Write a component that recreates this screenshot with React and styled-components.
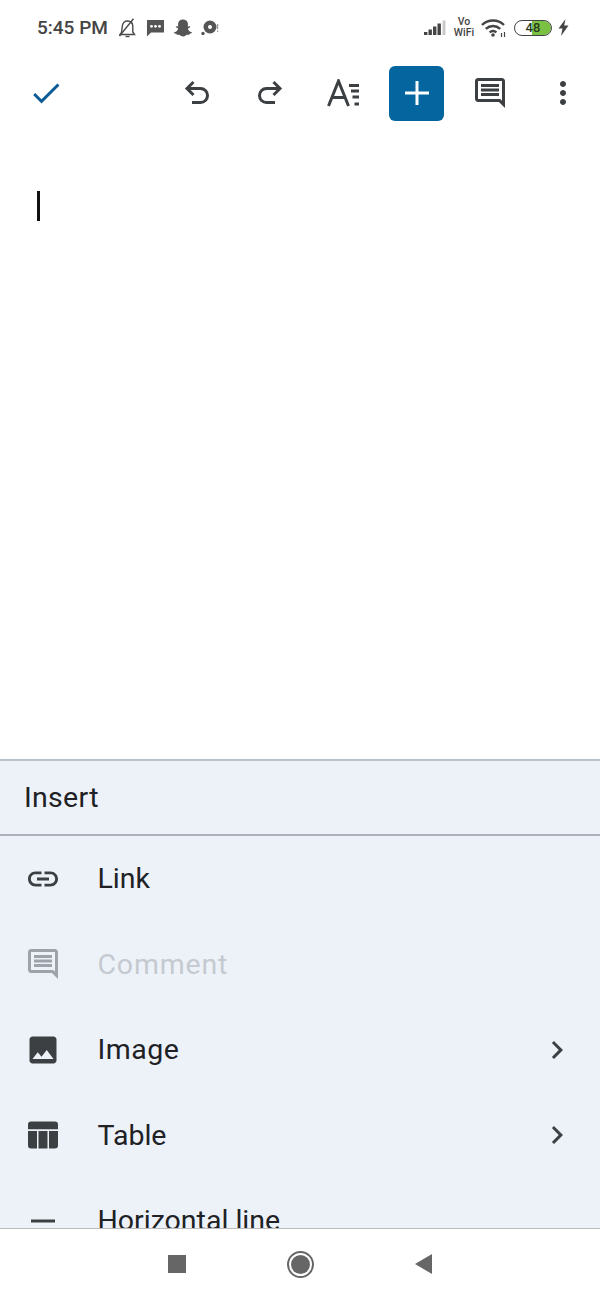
import React from 'react';
import styled, { createGlobalStyle } from 'styled-components';
import { FaSnapchatGhost } from 'react-icons/fa';

const Global = createGlobalStyle`
  html, body {
    margin: 0;
    padding: 0;
    background: #fff;
  }
  * {
    box-sizing: border-box;
  }
`;

const Page = styled.div`
  width: 600px;
  height: 1300px;
  display: flex;
  flex-direction: column;
  background: #fff;
  font-family: Roboto, "Liberation Sans", sans-serif;
  overflow: hidden;
`;

const StatusBar = styled.div`
  height: 55px;
  flex-shrink: 0;
  display: flex;
  align-items: center;
  padding: 0 31px 0 37px;
  color: #4a4a4a;
`;

const Time = styled.span`
  font-family: Roboto, sans-serif;
  font-size: 19px;
  font-weight: 500;
  color: #444;
  margin-right: 1px;
`;

const StatusLeft = styled.div`
  display: flex;
  align-items: center;
  gap: 9px;
`;

const StatusRight = styled.div`
  display: flex;
  align-items: center;
  gap: 7px;
  margin-left: auto;
`;

const VoWifi = styled.span`
  font-family: Roboto, sans-serif;
  font-size: 10.5px;
  line-height: 10.5px;
  font-weight: 500;
  color: #444;
  text-align: center;
  width: 22px;
  margin: 0 -1px 0 -1px;
`;

const Battery = styled.span`
  width: 38px;
  height: 16px;
  border: 1.5px solid #444;
  border-radius: 8px;
  display: flex;
  align-items: center;
  justify-content: center;
  font-family: Roboto, sans-serif;
  font-size: 13px;
  font-weight: 500;
  color: #2a3a20;
  background: linear-gradient(90deg, transparent 46%, #7ac143 46%);
  background-clip: padding-box;
  margin-right: -1px;
`;

const Toolbar = styled.div`
  height: 76px;
  flex-shrink: 0;
  display: flex;
  align-items: center;
  padding: 0 1px 0 28px;
`;

const ToolGroup = styled.div`
  display: flex;
  align-items: center;
  margin-left: auto;
`;

const ToolCell = styled.div`
  width: 73px;
  height: 56px;
  display: flex;
  align-items: center;
  justify-content: center;
  color: #3c4043;
`;

const PlusButton = styled.div`
  width: 55px;
  height: 55px;
  border-radius: 6px;
  background: #05669f;
  display: flex;
  align-items: center;
  justify-content: center;
`;

const Editor = styled.div`
  flex: 1;
  padding: 60px 0 0 37px;
`;

const Caret = styled.div`
  width: 2.5px;
  height: 30px;
  background: #111;
`;

const Sheet = styled.div`
  height: 469px;
  flex-shrink: 0;
  display: flex;
  flex-direction: column;
  background: #edf2f9;
  border-top: 2px solid #b9c1c9;
  overflow: hidden;
`;

const SheetHeader = styled.div`
  height: 75px;
  flex-shrink: 0;
  display: flex;
  align-items: center;
  padding-left: 24px;
  border-bottom: 2px solid #adb3bd;
  font-size: 28.5px;
  letter-spacing: 0.3px;
  color: #202124;
`;

const Row = styled.div`
  height: 85.5px;
  flex-shrink: 0;
  display: flex;
  align-items: center;
  padding: 0 25px;
  color: ${(p) => (p.$disabled ? '#9ea2aa' : '#3c4043')};
`;

const RowLabel = styled.span`
  margin-left: 36.5px;
  font-size: 28.5px;
  letter-spacing: ${(p) => p.$spacing || 0}px;
  color: ${(p) => (p.$disabled ? '#c5c9d0' : '#202124')};
`;

const RowEnd = styled.div`
  margin-left: auto;
  display: flex;
`;

const NavBar = styled.div`
  height: 72px;
  flex-shrink: 0;
  display: flex;
  align-items: center;
  justify-content: center;
  gap: 101px;
  border-top: 1px solid #bcbcbc;
  background: #fff;
  padding: 0 1px 1px 0;
`;

const NavSquare = styled.div`
  width: 18px;
  height: 18px;
  background: #666;
`;

const NavCircle = styled.div`
  width: 27px;
  height: 27px;
  border-radius: 50%;
  border: 2px solid #666;
  padding: 2px;
  &::after {
    content: '';
    display: block;
    width: 100%;
    height: 100%;
    border-radius: 50%;
    background: #666;
  }
`;

const NavBack = styled.div`
  width: 0;
  height: 0;
  border-style: solid;
  border-width: 10px 17px 10px 0;
  border-color: transparent #666 transparent transparent;
`;

const UndoSvg = styled.svg`
  transform: ${(p) => (p.$flip ? 'translateX(-2px) scaleX(-1)' : 'none')};
`;

const Icon = ({ d, size = 36, color = 'currentColor' }) => (
  <svg width={size} height={size} viewBox="0 0 24 24" fill={color}>
    <path d={d} />
  </svg>
);

const icons = {
  check: 'M9 16.17L4.83 12l-1.42 1.41L9 19 21 7l-1.41-1.41z',
  comment:
    'M21.99 4c0-1.1-.89-2-1.99-2H4c-1.1 0-2 .9-2 2v12c0 1.1.9 2 2 2h14l4 4-.01-18zM20 4v13.17L18.83 16H4V4h16zM6 12h12v2H6zm0-3h12v2H6zm0-3h12v2H6z',
  more: 'M12 8c1.1 0 2-.9 2-2s-.9-2-2-2-2 .9-2 2 .9 2 2 2zm0 2c-1.1 0-2 .9-2 2s.9 2 2 2 2-.9 2-2-.9-2-2-2zm0 6c-1.1 0-2 .9-2 2s.9 2 2 2 2-.9 2-2-.9-2-2-2z',
  link: 'M3.9 12c0-1.71 1.39-3.1 3.1-3.1h4V7H7c-2.76 0-5 2.24-5 5s2.24 5 5 5h4v-1.9H7c-1.71 0-3.1-1.39-3.1-3.1zM8 13h8v-2H8v2zm9-6h-4v1.9h4c1.71 0 3.1 1.39 3.1 3.1s-1.39 3.1-3.1 3.1h-4V17h4c2.76 0 5-2.24 5-5s-2.24-5-5-5z',
  image:
    'M21 19V5c0-1.1-.9-2-2-2H5c-1.1 0-2 .9-2 2v14c0 1.1.9 2 2 2h14c1.1 0 2-.9 2-2zM8.5 13.5l2.5 3.01L14.5 12l4.5 6H5l3.5-4.5z',
  table:
    'M4 3h16a2 2 0 0 1 2 2v3.2H2V5a2 2 0 0 1 2-2zM2 9.4h6V21H4a2 2 0 0 1-2-2zM9 9.4h6V21H9zM16 9.4h6V19a2 2 0 0 1-2 2h-4z',
  line: 'M4 11h16v2H4z',
  chevron: 'M10 6L8.59 7.41 13.17 12l-4.58 4.59L10 18l6-6z',
};

const UndoIcon = ({ flip }) => (
  <UndoSvg
    $flip={flip}
    width="28"
    height="28"
    viewBox="0 0 28 28"
    fill="none"
    stroke="#3c4043"
    strokeWidth="3"
  >
    <path d="M9.5 3 L3 9.5 L9.5 16 M3 9.5 H16.5 a7 7 0 0 1 0 14 H8" />
  </UndoSvg>
);

const TextFormatIcon = () => (
  <svg width="34" height="28" viewBox="0 0 34 28" fill="none" stroke="#3c4043">
    <path d="M1.5 27 L11.5 2 L21.5 27 M5 18.5 H18" strokeWidth="3" />
    <path d="M22 6.5 H32 M24 12 H32 M25.5 18 H32 M27.5 25 H32" strokeWidth="3" />
  </svg>
);

const BellOff = () => (
  <svg width="19" height="20" viewBox="0 0 19 20" fill="none" stroke="#4a4a4a" strokeWidth="1.4">
    <path d="M3.5 14.5 L2 16.5 H16.5 L14.8 14 V8.5 C14.8 5 12.5 3 9.5 3 C8 3 6.8 3.5 6 4.2 C4.8 5.3 4.3 7 4.2 9 Z" />
    <path d="M7.5 18.5 H11.5" />
    <path d="M15.5 0.8 L1.5 18" />
  </svg>
);

const MessageIcon = () => (
  <svg width="19" height="18" viewBox="0 0 19 18" fill="#555">
    <path d="M1 1 H18 V13.5 H5 L1 17.5 Z" />
    <circle cx="5.5" cy="7.3" r="1.4" fill="#fff" />
    <circle cx="9.5" cy="7.3" r="1.4" fill="#fff" />
    <circle cx="13.5" cy="7.3" r="1.4" fill="#fff" />
  </svg>
);

const DiscIcon = () => (
  <svg width="18" height="18" viewBox="0 0 18 18">
    <circle cx="9" cy="8" r="6.5" fill="#555" />
    <circle cx="9" cy="8" r="2" fill="#fff" />
    <circle cx="2" cy="14.5" r="1.7" fill="#555" />
    <path d="M16.6 5 V10 M16.6 11.5 V13" stroke="#999" strokeWidth="1.2" />
  </svg>
);

const SignalIcon = () => (
  <svg width="23" height="16" viewBox="0 0 23 16" fill="#444">
    <rect x="0" y="12" width="3.4" height="3" />
    <rect x="4.5" y="9.5" width="3.4" height="5.5" />
    <rect x="9" y="6.5" width="3.4" height="8.5" />
    <rect x="13.5" y="3.5" width="3.4" height="11.5" />
    <rect x="18.5" y="0.5" width="3" height="14.5" fill="#c9c9c9" />
  </svg>
);

const WifiIcon = () => (
  <svg width="26" height="20" viewBox="0 0 26 20" fill="none" stroke="#444" strokeWidth="2.4">
    <path d="M1 7 C7 1 17 1 23 7" />
    <path d="M4.8 10.8 C9 7 15 7 19.2 10.8" />
    <path d="M8.6 14.4 C10.8 12.6 13.2 12.6 15.4 14.4" />
    <circle cx="12" cy="17" r="1.8" fill="#444" stroke="none" />
    <path d="M20.5 15 V19 M23.5 14 V19" strokeWidth="1.2" />
  </svg>
);

const BoltIcon = () => (
  <svg width="11" height="17" viewBox="0 0 11 17" fill="#444">
    <path d="M7.5 0 L0.5 9.5 H4.5 L3 17 L10.5 6.5 H6.2 Z" />
  </svg>
);

const rows = [
  { label: 'Link', icon: 'link' },
  { label: 'Comment', icon: 'comment', disabled: true, spacing: 0.8 },
  { label: 'Image', icon: 'image', more: true, spacing: 0.5 },
  { label: 'Table', icon: 'table', more: true },
  { label: 'Horizontal line', icon: 'line' },
];

export default function App() {
  return (
    <Page>
      <Global />
      <StatusBar>
        <StatusLeft>
          <Time>5:45 PM</Time>
          <BellOff />
          <MessageIcon />
          <FaSnapchatGhost size={18} color="#555" />
          <DiscIcon />
        </StatusLeft>
        <StatusRight>
          <SignalIcon />
          <VoWifi>
            Vo
            <br />
            WiFi
          </VoWifi>
          <WifiIcon />
          <Battery>48</Battery>
          <BoltIcon />
        </StatusRight>
      </StatusBar>

      <Toolbar>
        <Icon d={icons.check} size={36} color="#0b5c96" />
        <ToolGroup>
          <ToolCell>
            <UndoIcon />
          </ToolCell>
          <ToolCell>
            <UndoIcon flip />
          </ToolCell>
          <ToolCell>
            <TextFormatIcon />
          </ToolCell>
          <ToolCell>
            <PlusButton>
              <svg width="26" height="26" viewBox="0 0 26 26" stroke="#fff" strokeWidth="3">
                <path d="M13 1 V25 M1 13 H25" />
              </svg>
            </PlusButton>
          </ToolCell>
          <ToolCell>
            <Icon d={icons.comment} />
          </ToolCell>
          <ToolCell>
            <Icon d={icons.more} />
          </ToolCell>
        </ToolGroup>
      </Toolbar>

      <Editor>
        <Caret />
      </Editor>

      <Sheet>
        <SheetHeader>Insert</SheetHeader>
        {rows.map((row) => (
          <Row key={row.label} $disabled={row.disabled}>
            <Icon d={icons[row.icon]} />
            <RowLabel $disabled={row.disabled} $spacing={row.spacing}>
              {row.label}
            </RowLabel>
            {row.more && (
              <RowEnd>
                <Icon d={icons.chevron} />
              </RowEnd>
            )}
          </Row>
        ))}
      </Sheet>

      <NavBar>
        <NavSquare />
        <NavCircle />
        <NavBack />
      </NavBar>
    </Page>
  );
}
